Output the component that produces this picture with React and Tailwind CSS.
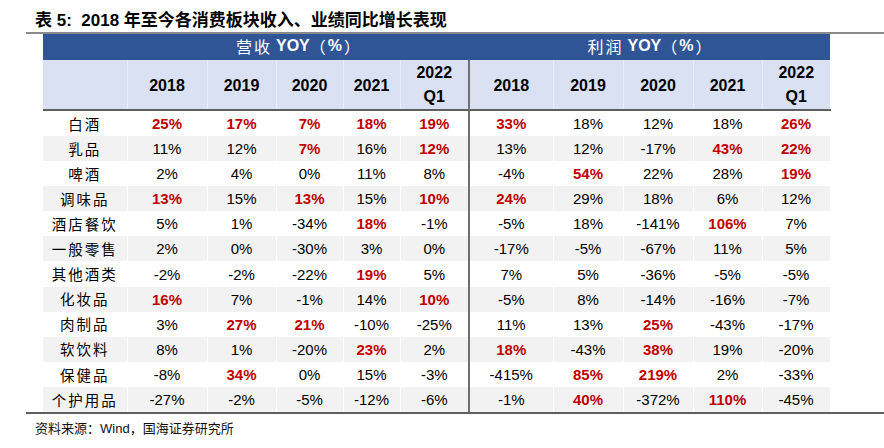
import React from 'react';

const years = ['2018', '2019', '2020', '2021'];

// [label, revenue x5, profit x5]; '!' prefix = red bold
const rows = [
    ['白酒', '!25%', '!17%', '!7%', '!18%', '!19%', '!33%', '18%', '12%', '18%', '!26%'],
    ['乳品', '11%', '12%', '!7%', '16%', '!12%', '13%', '12%', '-17%', '!43%', '!22%'],
    ['啤酒', '2%', '4%', '0%', '11%', '8%', '-4%', '!54%', '22%', '28%', '!19%'],
    ['调味品', '!13%', '15%', '!13%', '15%', '!10%', '!24%', '29%', '18%', '6%', '12%'],
    ['酒店餐饮', '5%', '1%', '-34%', '!18%', '-1%', '-5%', '18%', '-141%', '!106%', '7%'],
    ['一般零售', '2%', '0%', '-30%', '3%', '0%', '-17%', '-5%', '-67%', '11%', '5%'],
    ['其他酒类', '-2%', '-2%', '-22%', '!19%', '5%', '7%', '5%', '-36%', '-5%', '-5%'],
    ['化妆品', '!16%', '7%', '-1%', '14%', '!10%', '-5%', '8%', '-14%', '-16%', '-7%'],
    ['肉制品', '3%', '!27%', '!21%', '-10%', '-25%', '11%', '13%', '!25%', '-43%', '-17%'],
    ['软饮料', '8%', '1%', '-20%', '!23%', '2%', '!18%', '-43%', '!38%', '19%', '-20%'],
    ['保健品', '-8%', '!34%', '0%', '15%', '-3%', '-415%', '!85%', '!219%', '2%', '-33%'],
    ['个护用品', '-27%', '-2%', '-5%', '-12%', '-6%', '-1%', '!40%', '-372%', '!110%', '-45%'],
];

const widths = [84, 80, 69, 67, 57, 69, 84, 70, 70, 69, 68];

const sans = "font-['Liberation_Sans','Noto_Sans_CJK_SC',sans-serif]";
const cjk = "font-['Noto_Sans_CJK_SC',sans-serif]";

function GroupTitle({ name }) {
    return (
        <span className="inline-flex items-center">
            <span className={`${cjk} tracking-[2px]`}>{name}</span>
            <span className="font-bold ml-[4px]">YOY</span>
            <span className={cjk}>（</span>
            <span className="font-bold mx-[2px]">%</span>
            <span className={cjk}>）</span>
        </span>
    );
}

export default function App() {
    return (
        <div className={`w-[884px] h-[448px] bg-white text-black ${sans}`}>
            <div className="pl-[35px] pt-[10px] h-[32px] text-[17px] font-bold leading-[21px]">
                表 5:&nbsp; 2018 年至今各消费板块收入、业绩同比增长表现
            </div>
            <div className="ml-[26px] border-t-2 border-[#8a8a8a]" />
            <table className="ml-[43px] w-[787px] table-fixed border-collapse">
                <colgroup>
                    {widths.map((w, i) => (
                        <col key={i} style={{ width: w }} />
                    ))}
                </colgroup>
                <thead>
                    <tr className="h-[26px] bg-[#2f5597] text-white text-[16px] leading-[20px]">
                        <th />
                        <th colSpan={5} className="font-normal">
                            <GroupTitle name="营收" />
                        </th>
                        <th colSpan={5} className="font-normal">
                            <GroupTitle name="利润" />
                        </th>
                    </tr>
                    <tr className="h-[50px] bg-[#d9e1f2] text-[16px] font-bold leading-[24px] border-b-2 border-[#5f5f5f]">
                        <th className="border-r border-[#e8edf7]" />
                        {[0, 1].map((g) => (
                            <React.Fragment key={g}>
                                {years.map((y) => (
                                    <th key={y} className="border-r border-[#e8edf7] pt-[2px]">{y}</th>
                                ))}
                                <th className={g === 0 ? 'border-r-2 border-r-[#6f6f6f]' : ''}>
                                    2022<br />Q1
                                </th>
                            </React.Fragment>
                        ))}
                    </tr>
                </thead>
                <tbody>
                    {rows.map((r, i) => (
                        <tr key={r[0]} className={`h-[25.1px] text-[15px] ${i % 2 ? 'bg-[#f2f2f2]' : 'bg-white'}`}>
                            <td className={`${cjk} text-center tracking-[2px] text-[14.5px] border-r border-white`}>{r[0]}</td>
                            {r.slice(1).map((v, j) => {
                                const red = v.startsWith('!');
                                return (
                                    <td
                                        key={j}
                                        className={`text-center leading-[25px] ${
                                            j === 4 ? 'border-r-2 border-r-[#6f6f6f]' : 'border-r border-white'
                                        } ${red ? 'text-[#c00000] font-bold' : ''}`}
                                    >
                                        {red ? v.slice(1) : v}
                                    </td>
                                );
                            })}
                        </tr>
                    ))}
                </tbody>
            </table>
            <div className="ml-[26px] border-t-2 border-[#5f5f5f]" />
            <div className={`pl-[35px] pt-[5px] text-[13px] ${cjk} leading-[18px] text-[#111]`}>
                资料来源：<span className={sans}>Wind</span>，国海证券研究所
            </div>
        </div>
    );
}
